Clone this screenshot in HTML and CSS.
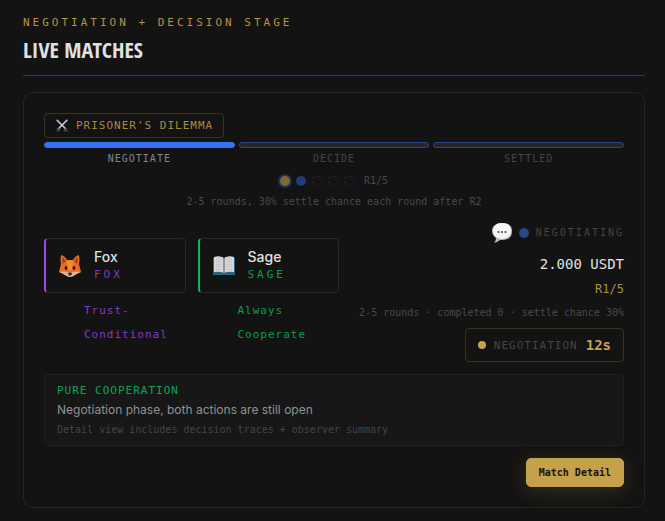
FILE: index.html
```html
<!DOCTYPE html>
<html lang="en">
<head>
    <meta charset="UTF-8">
    <meta name="viewport" content="width=device-width, initial-scale=1.0">
    <title>Live Matches</title>
    <link rel="stylesheet" href="styles.css">
</head>
<body>
    <main>
        <header class="section-header">
            <p class="eyebrow">NEGOTIATION + DECISION STAGE</p>
            <h1>LIVE MATCHES</h1>
        </header>

        <article class="match-card">
            <div class="game-tag">
                <svg class="tag-icon" viewBox="0 0 16 16" aria-hidden="true">
                    <path d="M2 11l4 3M2 14l3-3M14 11l-4 3M14 14l-3-3" stroke="#4b4d50" stroke-width="1.6"/>
                    <path d="M2 1l10 10M14 1L4 11" stroke="#aebac2" stroke-width="1.7"/>
                    <path d="M2 1l8 8M14 1L6 9" stroke="#dce5ea" stroke-width="0.7"/>
                </svg>
                <span>PRISONER'S DILEMMA</span>
            </div>

            <!-- Phase progress -->
            <ol class="phases">
                <li class="phase active">NEGOTIATE</li>
                <li class="phase">DECIDE</li>
                <li class="phase">SETTLED</li>
            </ol>

            <div class="rounds">
                <span class="round current"></span>
                <span class="round next"></span>
                <span class="round"></span>
                <span class="round"></span>
                <span class="round"></span>
                <span class="round-count">R1/5</span>
            </div>
            <p class="round-note">2-5 rounds, 30% settle chance each round after R2</p>

            <div class="match-body">
                <div class="agent fox">
                    <div class="agent-card">
                        <svg class="agent-icon" viewBox="0 0 24 24" aria-hidden="true">
                            <path d="M3 1q4 1 6 5h6q2-4 6-5 1 5 0 9l2 8q-3 1-6 3-3 2-5 2t-5-2q-3-2-6-3l2-8Q2 6 3 1z" fill="#ec6d1f"/>
                            <path d="M4 3q2 1 4 4l-3 3Q4 7 4 3zM20 3q-2 1-4 4l3 3q1-3 1-7z" fill="#a5441c"/>
                            <path d="M9 7q3-2 6 0l-1 9h-4z" fill="#f98b2c"/>
                            <path d="M1 18q4-1 8 0l3 1 3-1q4-1 8 0-3 1-6 3-3 2-5 2t-5-2q-3-2-6-3z" fill="#dcb592"/>
                            <ellipse cx="8" cy="14" rx="1.4" ry="2" fill="#28211e"/>
                            <ellipse cx="16" cy="14" rx="1.4" ry="2" fill="#28211e"/>
                            <path d="M10 19q2-1 4 0 0 2-2 3-2-1-2-3z" fill="#302b2b"/>
                        </svg>
                        <div>
                            <h2>Fox</h2>
                            <p class="agent-code">FOX</p>
                        </div>
                    </div>
                    <p class="strategy">Trust-<br>Conditional</p>
                </div>

                <div class="agent sage">
                    <div class="agent-card">
                        <svg class="agent-icon" viewBox="0 0 24 24" aria-hidden="true">
                            <path d="M1 4h22v17H1z" fill="#28627c"/>
                            <path d="M2 3q6-2 10 1 4-3 10-1v15q-6-1-10 1-4-2-10-1z" fill="#d7d7dc"/>
                            <path d="M12 4v15" stroke="#66666c" stroke-width="1.2"/>
                            <path d="M4 5.500q4-1 6 0M4 8q4-1 6 0M4 10.500q4-1 6 0M4 13q4-1 6 0M4 15.500q4-1 6 0M14 5.500q4-1 6 0M14 8q4-1 6 0M14 10.500q4-1 6 0M14 13q4-1 6 0M14 15.500q4-1 6 0" fill="none" stroke="#b8b8be" stroke-width="0.8"/>
                        </svg>
                        <div>
                            <h2>Sage</h2>
                            <p class="agent-code">SAGE</p>
                        </div>
                    </div>
                    <p class="strategy">Always<br>Cooperate</p>
                </div>

                <div class="match-meta">
                    <div class="status">
                        <svg class="status-icon" viewBox="0 0 20 20" aria-hidden="true">
                            <path d="M10 0C4 0 0 3 0 8q0 4 4 7 0 3-2 5 4-1 6-3 12 1 12-9 0-8-10-8z" fill="#b9b9b9"/>
                            <path d="M10 0C4 0 1 3 1 8q0 7 9 8 9-1 9-8 0-8-9-8z" fill="#f4f4f4"/>
                            <g fill="#444"><circle cx="6.500" cy="9" r="1"/><circle cx="10" cy="9" r="1"/><circle cx="13.500" cy="9" r="1"/></g>
                        </svg>
                        <span class="status-dot"></span>
                        <span>NEGOTIATING</span>
                    </div>
                    <p class="stake">2.000 USDT</p>
                    <p class="meta-round">R1/5</p>
                    <p class="meta-note">2-5 rounds · completed 0 · settle chance 30%</p>
                    <div class="timer">
                        <span class="timer-dot"></span>
                        <span class="timer-label">NEGOTIATION</span>
                        <strong>12s</strong>
                    </div>
                </div>
            </div>

            <section class="summary">
                <h3>PURE COOPERATION</h3>
                <p class="summary-text">Negotiation phase, both actions are still open</p>
                <p class="summary-hint">Detail view includes decision traces + observer summary</p>
            </section>

            <div class="actions">
                <button type="button" class="detail-button">Match Detail</button>
            </div>
        </article>
    </main>
</body>
</html>
```
FILE: styles.css
```css
*,
*::before {
  box-sizing: border-box;
}

body {
  margin: 0;
  background-color: #131313;
  color: #e0e0e0;
  font-family: "DejaVu Sans Mono", monospace;
  font-size: 10px;
}

h1, h2, h3, p, ol {
  margin: 0;
  padding: 0;
}

main {
  padding: 13px 20px 13px 23px;
}

/* Section header */
.section-header {
  padding-bottom: 12px;
  border-bottom: 1px solid #453b22;
  margin-bottom: 16px;
}

.eyebrow {
  font-size: 11px;
  line-height: 20px;
  letter-spacing: 3px;
  color: #b39344;
}

h1 {
  margin-top: 2px;
  font-family: "Open Sans Condensed", "Roboto Condensed", "Liberation Sans Narrow", "Liberation Sans", sans-serif;
  font-size: 22px;
  line-height: 28px;
  font-weight: bold;
}

.match-card {
  border: 1px solid #252525;
  border-radius: 10px;
  padding: 20px;
}

.game-tag {
  display: flex;
  align-items: center;
  gap: 7px;
  width: fit-content;
  height: 25px;
  margin-bottom: 4px;
  padding: 0 10px;
  border: 1px solid #3b321d;
  border-radius: 4px;
  font-size: 11px;
  letter-spacing: 1px;
  color: #a88a41;
}

.tag-icon {
  width: 14px;
  height: 14px;
  fill: none;
}

/* Phase progress */
.phases {
  display: grid;
  grid-template-columns: repeat(3, 1fr);
  gap: 4px;
  list-style: none;
}

.phase {
  line-height: 12px;
  letter-spacing: 1px;
  text-align: center;
  color: #454545;
}

.phase::before {
  content: "";
  display: block;
  height: 6px;
  margin-bottom: 5px;
  border: 1px solid #284687;
  border-radius: 3px;
  background-color: #262626;
}

.phase.active {
  color: #858585;
}

.phase.active::before {
  border-color: #3772f2;
  background-color: #3772f2;
}

.rounds {
  display: flex;
  justify-content: center;
  align-items: center;
  gap: 6px;
  margin-top: 9px;
  line-height: 14px;
  color: #4a4a4a;
}

.round {
  width: 10px;
  height: 10px;
  border: 1px dashed #2a2a2a;
  border-radius: 50%;
}

.round.current {
  border: none;
  background-color: #806832;
  box-shadow: 0 0 0 2px #1d305b;
}

.round.next {
  border: none;
  background-color: #203b75;
}

.round-count {
  margin-left: 4px;
}

.round-note {
  margin-top: 6px;
  line-height: 16px;
  text-align: center;
  color: #4a4a4a;
}

/* Agents and match data */
.match-body {
  display: grid;
  grid-template-columns: 1fr 1fr 273px;
  column-gap: 12px;
  align-items: center;
  margin-top: 11px;
}

.agent {
  padding-top: 2px;
}

.agent-card {
  display: flex;
  align-items: center;
  gap: 12px;
  height: 55px;
  padding: 0 12px;
  border: 1px solid #282828;
  border-left-width: 2px;
  border-radius: 4px;
}

.agent-icon {
  width: 24px;
  height: 24px;
}

.agent h2 {
  font-family: Inter, sans-serif;
  font-size: 14px;
  line-height: 18px;
  font-weight: 500;
}

.agent-code {
  font-size: 11px;
  line-height: 18px;
  letter-spacing: 3px;
}

.strategy {
  margin-top: 6px;
  padding-left: 40px;
  font-size: 11px;
  line-height: 24px;
  letter-spacing: 1px;
}

.fox .agent-card {
  border-left-color: #a045eb;
}

.fox .agent-code,
.fox .strategy {
  color: #863bc4;
}

.sage .agent-card {
  border-left-color: #08bd58;
}

.sage .agent-code,
.sage .strategy {
  color: #0b9d4c;
}

.match-meta {
  display: flex;
  flex-direction: column;
  align-items: flex-end;
  white-space: nowrap;
}

.status {
  display: flex;
  align-items: center;
  gap: 7px;
  height: 23px;
  letter-spacing: 2px;
  color: #454545;
}

.status-icon {
  width: 20px;
  height: 20px;
}

.status-dot {
  width: 10px;
  height: 10px;
  border-radius: 50%;
  background-color: #28488c;
}

.stake {
  margin-top: 7px;
  font-size: 14px;
  line-height: 26px;
}

.meta-round {
  font-size: 12px;
  line-height: 24px;
  color: #ad8f45;
}

.meta-note {
  line-height: 24px;
  color: #4a4a4a;
}

.timer {
  display: flex;
  align-items: center;
  gap: 8px;
  height: 34px;
  margin-top: 3px;
  padding: 0 12px;
  border: 1px solid #3b321d;
  border-radius: 4px;
}

.timer-dot {
  width: 8px;
  height: 8px;
  border-radius: 50%;
  background-color: #c4a14a;
}

.timer-label {
  font-size: 11px;
  letter-spacing: 1px;
  color: #454545;
}

.timer strong {
  font-size: 14px;
  color: #c4a14a;
}

/* Summary */
.summary {
  margin-top: 12px;
  padding: 7px 12px 5px;
  border: 1px solid #202020;
  border-radius: 4px;
  background-color: #171717;
}

.summary h3 {
  font-size: 11px;
  line-height: 18px;
  font-weight: normal;
  letter-spacing: 1px;
  color: #0aa750;
}

.summary-text {
  font-family: Inter, sans-serif;
  font-size: 12px;
  line-height: 20px;
  color: #919191;
}

.summary-hint {
  line-height: 20px;
  color: #454545;
}

.actions {
  display: flex;
  justify-content: flex-end;
  margin-top: 12px;
}

.detail-button {
  height: 29px;
  padding: 0 12px;
  border: 1px solid #c4a14a;
  border-radius: 5px;
  background-color: #c4a14a;
  box-shadow: 0 4px 20px rgba(196, 161, 74, 0.2);
  color: #15130e;
  font-family: inherit;
  font-size: 10px;
  font-weight: bold;
  cursor: pointer;
}
```
